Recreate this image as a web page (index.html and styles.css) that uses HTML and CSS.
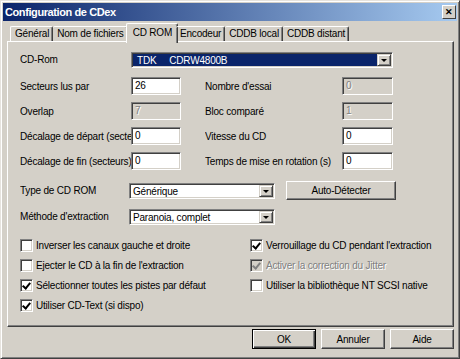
FILE: index.html
```html
<!DOCTYPE html>
<html lang="fr">
<head>
    <meta charset="UTF-8">
    <title>Configuration de CDex</title>
    <link rel="stylesheet" href="styles.css">
</head>
<body>
    <div class="window">
        <div class="titlebar">
            <span class="title">Configuration de CDex</span>
            <span class="close">&#x2715;</span>
        </div>
        <div class="dialog">
            <div class="tabs">
                <div class="tab">Général</div>
                <div class="tab">Nom de fichiers</div>
                <div class="tab active">CD ROM</div>
                <div class="tab">Encodeur</div>
                <div class="tab">CDDB local</div>
                <div class="tab">CDDB distant</div>
            </div>
            <div class="panel">
                <div class="fields">
                    <label class="lbl">CD-Rom</label>
                    <div class="combo combo-wide focused">
                        <span class="combo-text">TDK&nbsp;&nbsp;&nbsp;&nbsp;&nbsp;CDRW4800B</span>
                        <span class="drop"></span>
                    </div>

                    <label class="lbl">Secteurs lus par</label>
                    <div class="edit">26</div>
                    <span></span>
                    <label class="lbl">Nombre d'essai</label>
                    <div class="edit disabled">0</div>

                    <label class="lbl">Overlap</label>
                    <div class="edit disabled">7</div>
                    <span></span>
                    <label class="lbl">Bloc comparé</label>
                    <div class="edit disabled">1</div>

                    <label class="lbl">Décalage de départ (secte</label>
                    <div class="edit">0</div>
                    <span></span>
                    <label class="lbl">Vitesse du CD</label>
                    <div class="edit">0</div>

                    <label class="lbl">Décalage de fin (secteurs)</label>
                    <div class="edit">0</div>
                    <span></span>
                    <label class="lbl">Temps de mise en rotation (s)</label>
                    <div class="edit">0</div>
                </div>

                <div class="types">
                    <label class="lbl">Type de CD ROM</label>
                    <div class="combo"><span class="combo-text">Générique</span><span class="drop"></span></div>
                    <span></span>
                    <button class="btn">Auto-Détecter</button>

                    <label class="lbl">Méthode d'extraction</label>
                    <div class="combo"><span class="combo-text">Paranoia, complet</span><span class="drop"></span></div>
                </div>

                <div class="checks">
                    <div class="check"><span class="box"></span>Inverser les canaux gauche et droite</div>
                    <div class="check"><span class="box checked"></span>Verrouillage du CD pendant l'extraction</div>
                    <div class="check"><span class="box"></span>Ejecter le CD à la fin de l'extraction</div>
                    <div class="check disabled"><span class="box checked"></span>Activer la correction du Jitter</div>
                    <div class="check"><span class="box checked"></span>Sélectionner toutes les pistes par défaut</div>
                    <div class="check"><span class="box"></span>Utiliser la bibliothèque NT SCSI native</div>
                    <div class="check"><span class="box checked"></span>Utiliser CD-Text (si dispo)</div>
                </div>
            </div>
            <div class="buttons">
                <button class="btn default">OK</button>
                <button class="btn">Annuler</button>
                <button class="btn">Aide</button>
            </div>
        </div>
    </div>
</body>
</html>
```

FILE: styles.css
```css
body {
    margin: 0;
    font-family: "Liberation Sans", Arial, sans-serif;
    font-size: 10px;
    letter-spacing: -0.2px;
    color: #000;
    background: #d4d0c8;
}
.window {
    width: 460px;
    height: 359px;
    box-sizing: border-box;
    background: #d4d0c8;
    border: 1px solid;
    border-color: #e6e3de #404040 #404040 #e6e3de;
    box-shadow: inset 1px 1px 0 #fff, inset -1px -1px 0 #808080;
    padding: 2px;
}
.titlebar {
    height: 18px;
    background: linear-gradient(to right, #0a246a, #a6caf0);
    display: flex;
    align-items: center;
    justify-content: space-between;
    padding: 0 1px 0 2px;
}
.title {
    color: #fff;
    font-weight: bold;
    font-size: 11px;
    letter-spacing: -0.4px;
}
.close {
    width: 12px;
    height: 12px;
    background: #d4d0c8;
    border: 1px solid;
    border-color: #fff #404040 #404040 #fff;
    font-size: 9px;
    font-weight: bold;
    line-height: 12px;
    text-align: center;
    letter-spacing: 0;
}
.dialog {
    padding: 2px 3px 0 4px;
}
.tabs {
    display: flex;
    height: 18px;
    align-items: flex-end;
    padding-left: 3px;
    position: relative;
    z-index: 1;
}
.tab {
    height: 15px;
    line-height: 14px;
    padding: 0 3px 0 4px;
    border-top: 1px solid #fff;
    border-left: 1px solid #fff;
    border-right: 1px solid #404040;
    border-radius: 2px 2px 0 0;
    box-shadow: inset -1px 0 0 #808080;
    box-sizing: border-box;
}
.tab + .tab {
    border-left: none;
}
.tab.active {
    height: 20px;
    margin: 0 -2px -2px -2px;
    padding: 0 5px 0 6px;
    line-height: 17px;
    border-left: 1px solid #fff;
    background: #d4d0c8;
}
.tab.active + .tab {
    border-left: none;
}
.panel {
    height: 286px;
    box-sizing: border-box;
    border: 1px solid;
    border-color: #fff #404040 #404040 #fff;
    box-shadow: inset -1px -1px 0 #808080;
    padding: 10px 0 0 12px;
}
.lbl {
    white-space: nowrap;
    overflow: hidden;
}
.fields {
    display: grid;
    grid-template-columns: 111px 50px 24px 137px 51px;
    grid-template-rows: 18px 18px 18px 18px 18px;
    row-gap: 7px;
    align-items: center;
}
.fields > .lbl:first-child {
    align-self: start;
    line-height: 16px;
}
.combo-wide {
    grid-column: 2 / 6;
    align-self: start;
}
.edit {
    height: 18px;
    box-sizing: border-box;
    background: #fff;
    border: 1px solid;
    border-color: #808080 #fff #fff #808080;
    box-shadow: inset 1px 1px 0 #404040, inset -1px -1px 0 #d4d0c8;
    padding: 2px 0 0 3px;
    line-height: 12px;
}
.edit.disabled {
    background: #d4d0c8;
    color: #808080;
    text-shadow: 1px 1px 0 #fff;
}
.combo {
    height: 16px;
    box-sizing: border-box;
    background: #fff;
    border: 1px solid;
    border-color: #808080 #fff #fff #808080;
    box-shadow: inset 1px 1px 0 #404040, inset -1px -1px 0 #d4d0c8;
    display: flex;
    padding: 1px;
}
.combo-text {
    flex: 1;
    padding-left: 2px;
    line-height: 13px;
    white-space: nowrap;
}
.focused .combo-text {
    background: #0a246a;
    color: #fff;
    padding-left: 4px;
}
.drop {
    width: 14px;
    box-sizing: border-box;
    background: #d4d0c8;
    border: 1px solid;
    border-color: #d4d0c8 #404040 #404040 #d4d0c8;
    box-shadow: inset 1px 1px 0 #fff, inset -1px -1px 0 #808080;
    position: relative;
}
.drop::after {
    content: "";
    position: absolute;
    left: 3px;
    top: 4px;
    border-left: 3px solid transparent;
    border-right: 3px solid transparent;
    border-top: 3px solid #000;
}
.types {
    display: grid;
    grid-template-columns: 109px 146px 11px 110px;
    grid-template-rows: 19px 19px;
    row-gap: 7px;
    align-items: center;
    margin: 11px 0 0 0;
}
.btn {
    height: 19px;
    padding: 0;
    font: inherit;
    letter-spacing: inherit;
    color: #000;
    background: #d4d0c8;
    border: 1px solid;
    border-color: #fff #404040 #404040 #fff;
    box-shadow: inset -1px -1px 0 #808080;
}
.checks {
    display: grid;
    grid-template-columns: 230px 1fr;
    grid-auto-rows: 20px;
    margin-top: 9px;
    align-items: center;
}
.check {
    display: flex;
    align-items: center;
    white-space: nowrap;
}
.box {
    width: 13px;
    height: 13px;
    box-sizing: border-box;
    background: #fff;
    border: 1px solid;
    border-color: #808080 #fff #fff #808080;
    box-shadow: inset 1px 1px 0 #404040, inset -1px -1px 0 #d4d0c8;
    margin-right: 3px;
    position: relative;
}
.box.checked::after {
    content: "";
    position: absolute;
    left: 2px;
    top: 1px;
    width: 3px;
    height: 6px;
    border: solid #000;
    border-width: 0 2px 2px 0;
    transform: translate(1px, 0) rotate(40deg);
}
.check.disabled {
    color: #808080;
    text-shadow: 1px 1px 0 #fff;
}
.check.disabled .box {
    background: #d4d0c8;
}
.check.disabled .box::after {
    border-color: #808080;
}
.buttons {
    display: flex;
    justify-content: flex-end;
    gap: 5px;
    padding-top: 2px;
}
.buttons .btn {
    width: 64px;
    height: 20px;
}
.btn.default {
    border: 1px solid #000;
    box-shadow: inset 1px 1px 0 #fff, inset -1px -1px 0 #404040, inset -2px -2px 0 #808080;
}
```
